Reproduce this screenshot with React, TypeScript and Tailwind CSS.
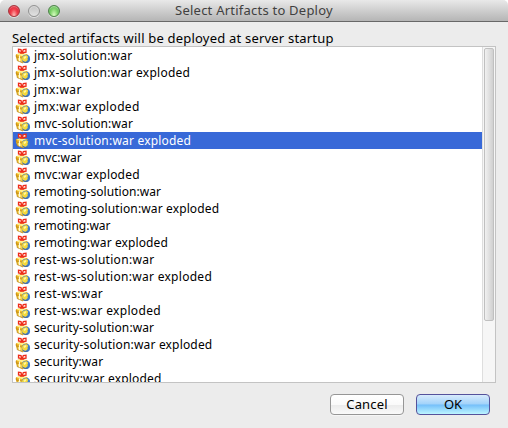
const artifacts = [
  { name: 'jmx-solution:war', tracking: 'tracking-[0.25px]' },
  { name: 'jmx-solution:war exploded', tracking: 'tracking-[0.26px]' },
  { name: 'jmx:war', tracking: 'tracking-[0.4px]' },
  { name: 'jmx:war exploded', tracking: 'tracking-[0.34px]' },
  { name: 'mvc-solution:war', tracking: 'tracking-[0.13px]' },
  { name: 'mvc-solution:war exploded', tracking: 'tracking-[0.2px]' },
  { name: 'mvc:war', tracking: 'tracking-[0.05px]' },
  { name: 'mvc:war exploded', tracking: 'tracking-[0.19px]' },
  { name: 'remoting-solution:war', tracking: 'tracking-[0.05px]' },
  { name: 'remoting-solution:war exploded', tracking: 'tracking-[0.13px]' },
  { name: 'remoting:war', tracking: 'tracking-[0px]' },
  { name: 'remoting:war exploded', tracking: 'tracking-[0.1px]' },
  { name: 'rest-ws-solution:war', tracking: 'tracking-[0.3px]' },
  { name: 'rest-ws-solution:war exploded', tracking: 'tracking-[0.29px]' },
  { name: 'rest-ws:war', tracking: 'tracking-[0.38px]' },
  { name: 'rest-ws:war exploded', tracking: 'tracking-[0.34px]' },
  { name: 'security-solution:war', tracking: 'tracking-[0.1px]' },
  { name: 'security-solution:war exploded', tracking: 'tracking-[0.17px]' },
  { name: 'security:war', tracking: 'tracking-[0.05px]' },
  { name: 'security:war exploded', tracking: 'tracking-[0.18px]' },
];

function ArtifactIcon() {
  return (
    <svg className="block h-4 w-4 shrink-0" viewBox="0 0 16 16" fill="none">
      <path d="M1 6.2 5 5.2l7.5.9V13L8 15l-5.5-2.3L1 9.5z" fill="#efb824" />
      <path d="M1.4 6.6 5.5 5.5l6 .9-4.2 1.8z" fill="#fff08c" />
      <path d="M2.4 9.4v2.9L6.6 14V10z" fill="#fbe065" />
      <path d="M1.2 6.8v2L7 10.1l4.5-1.6M2.2 9.2v3.4L8 15" stroke="#b07c18" strokeWidth=".7" />
      <path d="M4.5 7.6v5.6" stroke="#fffbe0" strokeWidth="1.1" />
      <path d="M6.8 4.6 3.5 4V1.2l2.5.3zM7.2 4.6l1.1-3.1 2.7-.3v2.9z" fill="#ffe9df" stroke="#ee2a18" strokeWidth="1.3" />
      <path d="M5 5.2h4.2" stroke="#ee3a1c" strokeWidth="1.2" />
      <circle cx="11" cy="10.9" r="4.1" fill="#3d7ccc" />
      <path d="M7.1 10c.6-2 2.8-3.2 5-2.5l1.1 1.2-.7 2 .3 1.3-2 1.8C8.2 14.3 6.8 12.2 7.1 10z" fill="#f5d93a" />
      <path d="M8.5 9.8c.5-1.2 1.8-1.8 2.9-1.4L11 10l-1.7.9z" fill="#fff7a0" />
      <path d="M8 13.2c1.4 1.5 3.4 1.8 5 .7" stroke="#47618b" strokeWidth=".7" />
    </svg>
  );
}

function TitleBar() {
  return (
    <header className="relative flex h-[22px] shrink-0 items-center justify-center rounded-t-[5px] border-b border-[#686868] bg-linear-to-b from-[#e9e9e9] to-[#b5b5b5]">
      <div className="absolute top-[5px] left-2 flex gap-2">
        <i className="h-3 w-3 rounded-full border border-[#a5353c] bg-[radial-gradient(ellipse_at_50%_95%,#ffc0ba_0%,#f24450_45%,#d5162a_90%)] shadow-[inset_0_1px_1px_#ffffff60,0_1px_0_#ffffff80]" />
        <i className="h-3 w-3 rounded-full border border-[#929292] bg-linear-to-b from-[#c4c4c4] to-[#e2e2e2] shadow-[inset_0_1px_1px_#ffffff60,0_1px_0_#ffffff80]" />
        <i className="h-3 w-3 rounded-full border border-[#4e8249] bg-[radial-gradient(ellipse_at_50%_95%,#dcffc4_0%,#82d46d_50%,#4fae4a_95%)] shadow-[inset_0_1px_1px_#ffffff70,0_1px_0_#ffffff80]" />
      </div>
      <h1 className="text-[13px] leading-[21px] tracking-[0.23px] whitespace-nowrap text-[#404040]">
        Select Artifacts to Deploy
      </h1>
    </header>
  );
}

export default function App() {
  return (
    <div className="h-[428px] w-[508px] bg-white font-['Noto_Sans',sans-serif] text-black">
      <main className="flex h-full flex-col overflow-hidden rounded-t-[5px] bg-[#ececec]">
        <TitleBar />
        <p className="mt-[8px] ml-3 h-4 text-[13px] leading-[17px] tracking-[0.2px] whitespace-nowrap">
          Selected artifacts will be deployed at server startup
        </p>
        <section className="ml-3 flex h-[337px] w-[484px] shrink-0 border border-[#c3c3c3] bg-white">
          <ul className="h-full min-w-0 flex-1 overflow-hidden">
            {artifacts.map(({ name, tracking }) => {
              const selected = name === 'mvc-solution:war exploded';
              return (
                <li
                  key={name}
                  className={`flex h-[17px] items-center gap-[3px] pl-0.5 text-[12px] leading-[17px] whitespace-nowrap ${selected ? 'bg-[#3869d8] text-white' : ''}`}
                >
                  <ArtifactIcon />
                  <span className={tracking}>{name}</span>
                </li>
              );
            })}
          </ul>
          <div className="h-full w-[13px] shrink-0 border-l border-[#dedede] bg-[#f6f6f6] px-px pt-px">
            <div className="h-[273px] rounded-[2px] border border-[#c0c0c0] bg-linear-to-r from-[#f1f1f1] to-[#d0d0d0]" />
          </div>
        </section>
        <footer className="mt-[11px] flex justify-end gap-3 pr-[18px] text-[13px]">
          <button className="h-[21px] w-[74px] rounded-[4px] border border-[#969696] bg-[linear-gradient(#fff_0%,#fafafa_50%,#ebebeb_52%,#fafafa_100%)] leading-[19px] tracking-[0.15px] shadow-[0_1px_0_#ffffff80]">
            Cancel
          </button>
          <button className="h-[21px] w-[74px] rounded-[4px] border border-[#55529b] bg-[linear-gradient(#d8ebfc_0%,#a1d2fa_48%,#74bffa_52%,#bdf5ff_100%)] leading-[19px]">
            OK
          </button>
        </footer>
      </main>
    </div>
  );
}
